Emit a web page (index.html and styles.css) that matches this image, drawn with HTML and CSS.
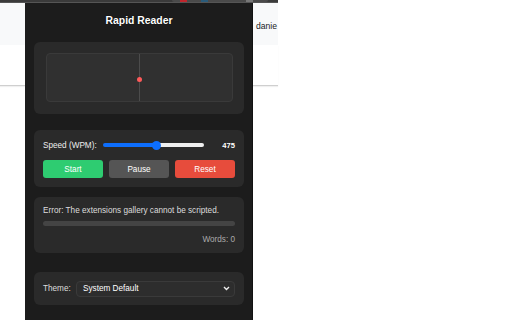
FILE: index.html
```html
<!doctype html>
<html lang="en">
<head>
<title>Rapid Reader</title>
<link rel="stylesheet" href="styles.css">
</head>
<body>

<div class="browser">
  <div class="tabstrip">
    <div class="toolbar-pill">
      <span class="dot dot-red"></span>
      <span class="dot dot-blue"></span>
      <span class="dot dot-grey"></span>
    </div>
  </div>
  <div class="site-header">
    <span class="user-name">danie</span>
  </div>
  <div class="site-body"></div>
</div>

<div class="popup">
  <div class="title">Rapid Reader</div>

  <div class="card card-display">
    <div class="display">
      <div class="focus-line"></div>
      <div class="focus-dot"></div>
    </div>
  </div>

  <div class="card card-controls">
    <div class="speed-row">
      <label class="speed-label" for="speed">Speed (WPM):</label>
      <input id="speed" class="speed" type="range" min="100" max="800" value="475">
      <span class="speed-value">475</span>
    </div>
    <div class="buttons">
      <button class="btn btn-start">Start</button>
      <button class="btn btn-pause">Pause</button>
      <button class="btn btn-reset">Reset</button>
    </div>
  </div>

  <div class="card card-status">
    <div class="status-text">Error: The extensions gallery cannot be scripted.</div>
    <div class="progress"></div>
    <div class="word-count">Words: 0</div>
  </div>

  <div class="card card-theme">
    <span class="theme-label">Theme:</span>
    <div class="select">
      <span>System Default</span>
      <svg width="7" height="5" viewBox="0 0 7 5"><polyline points="1,1 3.5,3.5 6,1" fill="none" stroke="#eee" stroke-width="1.4"/></svg>
    </div>
  </div>
</div>

</body>
</html>
```

FILE: styles.css
```css
* {
  box-sizing: border-box;
}

body {
  margin: 0;
  background: #ffffff;
  font-family: "Liberation Sans", Arial, sans-serif;
  width: 512px;
  height: 320px;
  overflow: hidden;
  position: relative;
}

.browser {
  width: 278px;
}

.tabstrip {
  height: 3px;
  background: #3a3a3a;
  border-bottom: 1px solid #555;
  display: flex;
  justify-content: flex-end;
  padding-right: 10px;
}

.toolbar-pill {
  width: 96px;
  height: 2px;
  background: #4a4a4a;
  border-radius: 0 0 6px 6px;
  display: flex;
  gap: 14px;
  padding-left: 8px;
}

.dot {
  width: 7px;
  height: 2px;
}

.dot-red { background: #c0262d; }
.dot-blue { background: #2a5b7a; }
.dot-grey { background: #777; margin-left: 24px; }

.site-header {
  height: 42px;
  background: #f8f9fa;
  display: flex;
  align-items: center;
  justify-content: flex-end;
  padding-top: 4px;
  padding-right: 1px;
}

.user-name {
  font-size: 8.6px;
  color: #202124;
}

.site-body {
  height: 41px;
  border-bottom: 1px solid #cfcfcf;
  box-shadow: 0 1px 1px rgba(0, 0, 0, 0.06);
}

.popup {
  position: absolute;
  left: 25px;
  top: 3px;
  width: 228px;
  height: 317px;
  background: #1c1c1c;
  border-right: 1px solid #111;
  padding: 0 8px 0 9px;
  color: #fff;
}

.title {
  text-align: center;
  font-weight: bold;
  font-size: 10.4px;
  line-height: 13px;
  padding-top: 11px;
  margin-bottom: 15px;
  text-shadow: 0 0 1px #000;
}

.card {
  background: #2a2a2a;
  border-radius: 6px;
  font-size: 8.2px;
}

.card-display {
  height: 72px;
  padding: 11px 11px 12px 12px;
}

.display {
  position: relative;
  height: 49px;
  background: #303030;
  border: 1px solid #3a3a3a;
  border-radius: 4px;
}

.focus-line {
  position: absolute;
  left: 92px;
  top: 0;
  bottom: 0;
  width: 1px;
  background: #4c4c4c;
}

.focus-dot {
  position: absolute;
  left: 90px;
  top: 23px;
  width: 5px;
  height: 5px;
  border-radius: 50%;
  background: #ff5a5a;
}

.card-controls {
  margin-top: 16px;
  height: 57px;
  padding: 9px 9px 0 9px;
}

.speed-row {
  display: flex;
  align-items: center;
  height: 12px;
}

.speed-label {
  color: #eee;
  width: 60px;
}

.speed {
  -webkit-appearance: none;
  appearance: none;
  width: 101px;
  height: 4px;
  margin: 0;
  border-radius: 2px;
  background: linear-gradient(to right, #0d6efd 53.5%, #efefef 53.5%);
}

.speed::-webkit-slider-thumb {
  -webkit-appearance: none;
  width: 9px;
  height: 9px;
  border-radius: 50%;
  background: #0d6efd;
}

.speed-value {
  margin-left: auto;
  font-weight: bold;
  font-size: 7.6px;
}

.buttons {
  display: flex;
  gap: 6px;
  margin-top: 9px;
}

.btn {
  width: 60px;
  height: 18px;
  border: none;
  border-radius: 3px;
  color: #fff;
  font: inherit;
  font-size: 8.2px;
  padding: 0;
}

.btn-start { background: #2ecc71; }
.btn-pause { background: #555555; }
.btn-reset { background: #e74c3c; }

.card-status {
  margin-top: 10px;
  height: 56px;
  padding: 9px 9px 0 9px;
}

.status-text {
  color: #ddd;
  line-height: 10px;
}

.progress {
  height: 5px;
  margin-top: 5px;
  background: #444;
  border-radius: 3px;
}

.word-count {
  margin-top: 9px;
  text-align: right;
  color: #aaa;
  line-height: 10px;
}

.card-theme {
  margin-top: 19px;
  height: 33px;
  padding: 0 9px;
  display: flex;
  align-items: center;
}

.theme-label {
  color: #ddd;
  width: 33px;
}

.select {
  flex: 1;
  height: 16px;
  background: #2d2d2d;
  border: 1px solid #3a3a3a;
  border-radius: 4px;
  display: flex;
  align-items: center;
  justify-content: space-between;
  padding: 0 4px 0 6px;
  color: #fff;
}
```
